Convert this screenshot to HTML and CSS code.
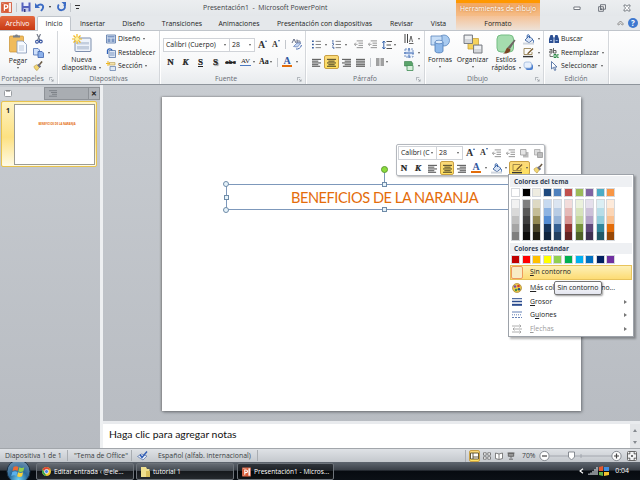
FILE: index.html
```html
<!DOCTYPE html>
<html lang="es">

<head>
    <meta charset="UTF-8">
    <meta name="viewport" content="width=device-width, initial-scale=1.0">
    <title>Presentación1 - Microsoft PowerPoint</title>
    <link rel="stylesheet" href="styles.css">
</head>

<body>
    <!-- Iconos compartidos -->
    <svg class="sprites" width="0" height="0">
        <symbol id="al-left" viewBox="0 0 10 10"><path d="M0 1.5h10M0 3.5h7M0 5.5h10M0 7.5h7M0 9.2h9" stroke="#4a4a4a" stroke-width="1.1"/></symbol>
        <symbol id="al-center" viewBox="0 0 10 10"><path d="M0 1.5h10M1.5 3.5h7M0 5.5h10M1.5 7.5h7M0 9.2h10" stroke="#4a4326" stroke-width="1.1"/></symbol>
        <symbol id="al-right" viewBox="0 0 10 10"><path d="M0 1.5h10M3 3.5h7M0 5.5h10M3 7.5h7M1 9.2h9" stroke="#4a4a4a" stroke-width="1.1"/></symbol>
        <symbol id="al-just" viewBox="0 0 10 10"><path d="M0 1.5h10M0 3.5h10M0 5.5h10M0 7.5h10M0 9.2h10" stroke="#4a4a4a" stroke-width="1.1"/></symbol>
        <symbol id="indent" viewBox="0 0 10 10"><path d="M3 1h7M5 3.5h5M5 6h5M3 8.5h7" stroke="#888"/><path d="M4 4.8H.5M2 3L.4 4.8 2 6.6" stroke="#999" fill="none"/></symbol>
        <symbol id="bullets" viewBox="0 0 10 10"><path d="M0 1.5h2M0 5h2M0 8.5h2" stroke="#3b5f9e" stroke-width="1.7"/><path d="M4 1.5h6M4 5h6M4 8.5h6" stroke="#777"/></symbol>
        <symbol id="bucket" viewBox="0 0 11 11"><path d="M2 6l4-4 4 3.5-4 3.3z" fill="#d5e2f6" stroke="#44669c" stroke-width=".9"/><path d="M4.2 4V1.3c1-1 2.300-.5 2.300 1V4M9 5c2 1.500 2 3 1 4" stroke="#2f5fa8" fill="none"/><path d="M0 9.600h11" stroke="#cfd5de" stroke-width="2"/></symbol>
        <symbol id="outline" viewBox="0 0 11 11"><path d="M1 1.5h7M1 1.5v6h8V5" stroke="#8c7440" fill="none" stroke-width=".8"/><path d="M4 6.5L9.5 1l1 1L5.4 7z" fill="#7a5c2d"/><path d="M0 9.6h10" stroke="#333" stroke-width="1.4"/></symbol>
        <symbol id="brush" viewBox="0 0 11 11"><path d="M1 6l3-2 3 3-2.5 3.5C3 10 1.500 8 1 6z" fill="#f2d774" stroke="#b08e35" stroke-width=".6"/><path d="M4.500 4.500L6 3l3 3-1.800 1.700z" fill="#6c6f85"/><path d="M7 4l3-3.500" stroke="#6a5a45" stroke-width="1.700"/></symbol>
        <symbol id="launch" viewBox="0 0 6 6"><path d="M.5 4V.5H4M2.500 2.500l2.500 2.500M5 2.800V5H2.800" stroke="#8c939b" stroke-width=".8" fill="none"/></symbol>
        <symbol id="ppt" viewBox="0 0 12 12"><path d="M.5.500h11v11H.5z" fill="#fbe9e3" stroke="#d2593a"/><path d="M1 1.500L8.500.5v11L1 10.500z" fill="#d95a35"/><path d="M3.700 9.500V3.200h1.500c2.900 0 2.900 3.600 0 3.600H4" stroke="#fff" stroke-width="1.400" fill="none"/></symbol>
    </svg>

    <div class="window">
        <header class="titlebar">
            <div class="quick">
                <svg width="11" height="11"><use href="#ppt"/></svg>
                <i class="vsep"></i>
                <svg width="10" height="10" viewBox="0 0 10 10"><path d="M.5.500h9v9h-9z" fill="#5562bd"/><path d="M2.500 0h5v4h-5z" fill="#e8ecfa"/><path d="M2.500 6h5v4h-5z" fill="#c4caec"/><path d="M3 7h1.500v3H3z" fill="#333a80"/></svg>
                <svg width="10" height="10" viewBox="0 0 10 10"><path d="M2 4c4-3 7.500-1 5.500 3L6 9" stroke="#3c6cc4" stroke-width="1.900" fill="none"/><path d="M0 1v5h5z" fill="#3c6cc4"/></svg>
                <i class="arrow dark"></i>
                <svg width="9" height="10" viewBox="0 0 9 10"><path d="M1.800 2.500c-2 3.500.2 6 3 5.700 3-.3 4-3.200 2.200-5.700" stroke="#3c6cc4" stroke-width="1.800" fill="none"/><path d="M4.500 0H9v4.500z" fill="#3c6cc4"/></svg>
                <i class="vsep"></i>
                <i class="more"></i>
            </div>
            <div class="doc-title">Presentación1 &nbsp;- &nbsp;Microsoft PowerPoint</div>
            <div class="context-title">Herramientas de dibujo</div>
            <div class="win-buttons">
                <svg width="8" height="8" viewBox="0 0 8 8"><path d="M.9 3h6.200v2.500H.9z" fill="#fff" stroke="#666c75" stroke-width=".9"/></svg>
                <svg width="8" height="8" viewBox="0 0 8 8"><path d="M2.500.7h5v4.500h-5zM.6 2.700h4.800v4.600H.6z" fill="#eee" stroke="#666c75" stroke-width=".9"/><path d="M2 4.500h2V6H2z" fill="#666c75"/></svg>
                <svg width="8" height="8" viewBox="0 0 8 8"><path d="M1 1h1.800L4 2.500 5.200 1H7v1.200L5.400 4 7 5.800V7H5.200L4 5.500 2.800 7H1V5.800L2.600 4 1 2.200z" fill="#fff" stroke="#5c626b" stroke-width=".8"/></svg>
            </div>
        </header>

        <nav class="tabs">
            <div class="tab file">Archivo</div>
            <div class="tab active">Inicio</div>
            <div class="tab t-insertar">Insertar</div>
            <div class="tab t-diseno">Diseño</div>
            <div class="tab t-trans">Transiciones</div>
            <div class="tab t-anim">Animaciones</div>
            <div class="tab t-pres">Presentación con diapositivas</div>
            <div class="tab t-revisar">Revisar</div>
            <div class="tab t-vista">Vista</div>
            <div class="tab t-formato">Formato</div>
            <div class="help">
                <svg width="7" height="6" viewBox="0 0 7 6"><path d="M.6 4L3.500 1l2.900 3-1 1-1.900-1.800L1.600 5z" fill="#fff" stroke="#666" stroke-width=".8"/></svg>
                <span class="help-icon">?</span>
            </div>
        </nav>

        <section class="ribbon">
            <div class="group g-clip">
                <div class="group-body">
                    <div class="big b-pegar">
                        <svg width="18" height="20" viewBox="0 0 18 20"><rect x=".5" y="2" width="14" height="16" rx="1" fill="#f0bb5c" stroke="#c89030" stroke-width=".7"/><path d="M4 3.500V1.500h2C6 0 9 0 9 1.500h2v2z" fill="#777f8a"/><path d="M8 7h6l3.500 3.500V19H8z" fill="#f7faff" stroke="#8296b5" stroke-width=".8"/><path d="M10 12h5M10 14h5M10 16h5" stroke="#a5b6d0" stroke-width=".7"/></svg>
                        <span>Pegar</span>
                        <i class="arrow"></i>
                    </div>
                    <div class="stack">
                        <div class="cmd"><svg width="11" height="10" viewBox="0 0 11 10"><path d="M4 0l3 6.500M7.500 0L4.500 6.500" stroke="#777e8c" stroke-width="1.200"/><circle cx="4" cy="7.700" r="1.400" fill="none" stroke="#2e4d9c" stroke-width="1.100"/><circle cx="7.800" cy="7.500" r="1.400" fill="none" stroke="#2e4d9c" stroke-width="1.100"/></svg></div>
                        <div class="cmd"><svg width="11" height="10" viewBox="0 0 11 10"><path d="M.5.500H5L6.500 2v5h-6z" fill="#cfe0fa" stroke="#4c70b5" stroke-width=".8"/><path d="M5 3.500h4L10.500 5v4.500H5z" fill="#8bb0ea" stroke="#3c62ac" stroke-width=".8"/></svg><i class="arrow"></i></div>
                        <div class="cmd"><svg width="10" height="10"><use href="#brush"/></svg></div>
                    </div>
                </div>
                <div class="group-name">Portapapeles<svg width="5" height="5"><use href="#launch"/></svg></div>
            </div>

            <div class="group g-slides">
                <div class="group-body">
                    <div class="big b-nueva">
                        <svg width="20" height="19" viewBox="0 0 20 19"><rect x="3" y="4" width="16" height="13.500" rx="1" fill="#eef3fa" stroke="#7d8fae"/><path d="M5 8h12v2.500H5zM5 12h12v3.500H5z" fill="#c3cede"/><path d="M5 0v10M0 5h10M1.500 1.500l7 7M8.500 1.500l-7 7" stroke="#f2b91d" stroke-width="1.200"/><circle cx="5" cy="5" r="2" fill="#fff3a0"/></svg>
                        <span>Nueva</span>
                        <span class="drop">diapositiva <i class="arrow"></i></span>
                    </div>
                    <div class="stack">
                        <div class="cmd"><svg width="10" height="10" viewBox="0 0 10 10"><path d="M.5 1h9v8h-9z" fill="#dce6f5" stroke="#5473a5" stroke-width=".8"/><path d="M1.500 2h7v1.500h-7zM1.500 4.500h3v3.500h-3zM5.500 4.500h3v3.500h-3z" fill="#7d98c4"/></svg>Diseño <i class="arrow"></i></div>
                        <div class="cmd"><svg width="10" height="10" viewBox="0 0 10 10"><path d="M3 2.500h6.500v7H3z" fill="#dfe8f5" stroke="#5b79a8" stroke-width=".8"/><path d="M4 5h4.500M4 7h4.500" stroke="#7d98c4"/><path d="M1.500 6V2.500C2 0 6 .5 6 2.500" stroke="#2f62b8" stroke-width="1.300" fill="none"/></svg>Restablecer</div>
                        <div class="cmd"><svg width="10" height="10" viewBox="0 0 10 10"><path d="M3 1.500h6V4H3z" fill="#f5e3ac" stroke="#b79a55" stroke-width=".6"/><path d="M4 5.500h5.500v4H4z" fill="#dfe8f5" stroke="#5b79a8" stroke-width=".7"/><path d="M2 0v5M0 2.500h4" stroke="#efb722"/></svg>Sección <i class="arrow"></i></div>
                    </div>
                </div>
                <div class="group-name">Diapositivas</div>
            </div>

            <div class="group g-font">
                <div class="rows">
                    <div class="row">
                        <div class="combo c-font">Calibri (Cuerpo)<i class="arrow"></i></div>
                        <div class="combo c-size">28<i class="arrow"></i></div>
                        <span class="glyph grow">A<i class="up"></i></span>
                        <span class="glyph shrink">A<i class="down"></i></span>
                        <i class="vsep"></i>
                        <svg width="11" height="11" viewBox="0 0 11 11"><path d="M1 4L3 0l2 4M6 .5v3.500h2.500c1 0 1-2 0-2H6" stroke="#555f78" fill="none" stroke-width=".9"/><path d="M2.500 7.500L6 4h4L6.500 8z" fill="#c8d8f2" stroke="#5a78b4" stroke-width=".7"/><path d="M5 10c2 .5 5-1 5.500-4" stroke="#4a6cb0" fill="none"/></svg>
                    </div>
                    <div class="row letters">
                        <b>N</b>
                        <b><em>K</em></b>
                        <b><u>S</u></b>
                        <b class="shadow">S</b>
                        <b class="strike">abc</b>
                        <span class="av">AV</span><i class="arrow"></i>
                        <span class="aa">Aa</span><i class="arrow"></i>
                        <i class="vsep"></i>
                        <span class="color-a">A</span><i class="arrow"></i>
                    </div>
                </div>
                <div class="group-name">Fuente<svg width="5" height="5"><use href="#launch"/></svg></div>
            </div>

            <div class="group g-para">
                <div class="group-body">
                    <div class="rows">
                        <div class="row">
                            <svg width="9" height="9"><use href="#bullets"/></svg><i class="arrow"></i>
                            <svg class="sp" width="9" height="9" viewBox="0 0 10 10"><path d="M1 0v3M.2 4h1.500v1.500L.3 6.500M0 8h2v2" stroke="#3b5f9e" fill="none"/><path d="M4 1.500h6M4 5h6M4 8.500h6" stroke="#777"/></svg><i class="arrow"></i>
                            <svg class="wide" width="9" height="9"><use href="#indent"/></svg>
                            <svg class="sp" width="9" height="9"><use href="#indent"/></svg>
                            <svg class="sp" width="10" height="10" viewBox="0 0 10 10"><path d="M4.500 1.500H10M4.500 5H9M4.500 8.500H10" stroke="#555"/><path d="M1.800 1v8M.3 2.700L1.800 1l1.500 1.700M.3 7.300L1.800 9l1.500-1.700" stroke="#2f5fa8" fill="none"/></svg><i class="arrow near"></i>
                        </div>
                        <div class="row aligns">
                            <svg width="9" height="9"><use href="#al-left"/></svg>
                            <span class="on"><svg width="9" height="9"><use href="#al-center"/></svg></span>
                            <svg width="9" height="9"><use href="#al-right"/></svg>
                            <svg class="j" width="9" height="9"><use href="#al-just"/></svg>
                            <i class="vsep"></i>
                            <svg width="8" height="8" viewBox="0 0 8 8"><path d="M0 1h3.500M0 3h3.500M0 5h3.500M0 7h3.500M4.500 1H8M4.500 3H8M4.500 5H8M4.500 7H8" stroke="#4a4a4a" stroke-width="1.200"/></svg><i class="arrow near"></i>
                        </div>
                    </div>
                    <div class="stack">
                        <div class="cmd"><svg width="10" height="10" viewBox="0 0 10 10"><path d="M1 0v9M3.500 0v9" stroke="#444"/><path d="M5.500 8l1.500-6 1.500 6M5 9.500h4.500" stroke="#555" fill="none" stroke-width=".9"/></svg><i class="arrow"></i></div>
                        <div class="cmd"><svg width="10" height="10" viewBox="0 0 10 10"><path d="M1 1h8v8H1z" fill="#e6eefa" stroke="#7894c2" stroke-dasharray="2 1"/><path d="M5 0v3.500M5 6.500V10M0 5h10" stroke="#2e5eaf"/></svg><i class="arrow"></i></div>
                        <div class="cmd"><svg width="10" height="10" viewBox="0 0 10 10"><path d="M.5.500h7L9 3 7.500 5h-7z" fill="#5aa46a" stroke="#347a48" stroke-width=".6"/><path d="M3 4.500h6v5H3z" fill="#d8eedb" stroke="#3e8b53" stroke-width=".8"/></svg><i class="arrow"></i></div>
                    </div>
                </div>
                <div class="group-name">Párrafo<svg width="5" height="5"><use href="#launch"/></svg></div>
            </div>

            <div class="group g-draw">
                <div class="group-body">
                    <div class="big b-formas">
                        <svg width="20" height="20" viewBox="0 0 20 20"><circle cx="14" cy="6.500" r="5.500" fill="#a9cbf0" stroke="#5a87bd" stroke-width=".8"/><path d="M1 2h11v9H1z" fill="#c7def7" stroke="#5a87bd" stroke-width=".8"/><path d="M5 8h8v9c0 2.500-8 2.500-8 0z" fill="#8db8ea" stroke="#4a79b5" stroke-width=".8"/><ellipse cx="9" cy="8" rx="4" ry="1.800" fill="#dcebfb" stroke="#4a79b5" stroke-width=".7"/></svg>
                        <span>Formas</span>
                        <i class="arrow"></i>
                    </div>
                    <div class="big b-org">
                        <svg width="20" height="20" viewBox="0 0 20 20"><path d="M5 4.500h10.500V15H5z" fill="#f5d25c" stroke="#c9a23b" stroke-width=".8"/><path d="M1 1h8.500v8.500H1zM10.500 11H19v8h-8.500z" fill="#d3d6da" stroke="#71757b" stroke-width=".9"/><path d="M2 2h6.500v3H2zM11.500 12H18v3h-6.500z" fill="#eef0f2"/></svg>
                        <span>Organizar</span>
                        <i class="arrow"></i>
                    </div>
                    <div class="big b-est">
                        <svg width="20" height="20" viewBox="0 0 20 20"><rect x="1" y="1" width="16.500" height="17" rx="4" fill="#a5dcae" stroke="#75bd83"/><path d="M11.500 13.500L18.500 5.500l1 1-5.500 8.500z" fill="#6e6663"/><path d="M7 19.500c3-1 2-4 4.500-6l3 2c0 3-4 4.500-7.500 4z" fill="#7c4322"/></svg>
                        <span>Estilos</span>
                        <span class="drop">rápidos <i class="arrow"></i></span>
                    </div>
                    <div class="stack">
                        <div class="cmd"><svg width="11" height="11"><use href="#bucket"/></svg><i class="arrow"></i></div>
                        <div class="cmd"><svg width="11" height="11"><use href="#outline"/></svg><i class="arrow"></i></div>
                        <div class="cmd"><svg width="11" height="10" viewBox="0 0 11 10"><rect x="2.500" y="3" width="7.500" height="6" rx="2" fill="#4c7fd0"/><rect x="1" y="1" width="7.500" height="6" rx="2" fill="#e6effc" stroke="#9db7dd" stroke-width=".8"/></svg><i class="arrow"></i></div>
                    </div>
                </div>
                <div class="group-name">Dibujo<svg width="5" height="5"><use href="#launch"/></svg></div>
            </div>

            <div class="group g-edit">
                <div class="group-body">
                    <div class="stack">
                        <div class="cmd"><svg width="10" height="10" viewBox="0 0 10 10"><path d="M1.500 1h2.200L4.500 4v5H0V5zM6.300 1h2.200L10 5v4H5.500V4z" fill="#2c4f91"/><path d="M4 3.500h2v2H4z" fill="#5e7fb8"/><path d="M1 6.500h2M6.700 6.500h2" stroke="#9db8e3"/></svg>Buscar</div>
                        <div class="cmd"><svg width="10" height="10" viewBox="0 0 10 10"><path d="M.5 1.500h2.500V5H.8V3H3M4.500 0v5H7V2.500H4.500" stroke="#555" fill="none" stroke-width=".9"/><path d="M1 6v2.500h3" stroke="#555" fill="none" stroke-width=".8"/><path d="M5 6.500h2v3H5zM9.800 6.800H8v2.500h1.800" stroke="#2d8a47" fill="none"/></svg>Reemplazar <i class="arrow"></i></div>
                        <div class="cmd"><svg width="10" height="10" viewBox="0 0 10 10"><path d="M2.500.500v7.500L4.400 6.300 5.700 9.500l1.200-.6L5.600 6H8z" fill="#fff" stroke="#3e5f98" stroke-width=".8"/></svg>Seleccionar <i class="arrow"></i></div>
                    </div>
                </div>
                <div class="group-name">Edición</div>
            </div>
        </section>

        <main class="workspace">
            <aside class="outline">
                <div class="pane-tabs">
                    <div class="pane-tab current"><svg width="8" height="7" viewBox="0 0 8 7"><rect x=".5" y=".5" width="7" height="6" rx="1" fill="#fff" stroke="#999da2"/><path d="M2 1h4" stroke="#777"/></svg></div>
                    <div class="pane-tab"><svg width="8" height="7" viewBox="0 0 8 7"><path d="M0 .7h8M2 2.500h6M3 4.300h5M0 6.200h8" stroke="#7d8288"/></svg></div>
                    <div class="pane-close">✕</div>
                </div>
                <div class="thumb">
                    <span class="num">1</span>
                    <div class="mini-slide">BENEFICIOS DE LA NARANJA</div>
                </div>
            </aside>
            <div class="editor">
                <div class="canvas">
                    <div class="slide">
                        <div class="title-box">
                            BENEFICIOS DE LA NARANJA
                            <i class="stem"></i>
                            <i class="rot"></i>
                            <i class="h round tl"></i>
                            <i class="h round bl"></i>
                            <i class="h ml"></i>
                            <i class="h tm"></i>
                            <i class="h bm"></i>
                        </div>
                    </div>
                </div>
                <div class="notes">
                    <div class="notes-text">Haga clic para agregar notas</div>
                    <div class="scroll"><i class="tri-up"></i><i class="tri-down"></i></div>
                </div>
            </div>
        </main>

        <footer class="status">
            <span class="st s1">Diapositiva 1 de 1</span>
            <span class="st s2">"Tema de Office"</span>
            <span class="st s3"><svg width="11" height="10" viewBox="0 0 11 10"><path d="M.5 5.500l4-2.500 5.500 2-4 4z" fill="#e7edf8" stroke="#5471a8" stroke-width=".7"/><path d="M3 3.500l2 3L10 .5" stroke="#2f5cb5" stroke-width="1.400" fill="none"/></svg>Español (alfab. internacional)</span>
            <div class="views">
                <span class="view on"><svg width="9" height="8" viewBox="0 0 9 8"><path d="M.5 1h8v6h-8zM3 1v6M3 5h5.500" fill="#fff" stroke="#554a2a" stroke-width=".9"/></svg></span>
                <svg width="8" height="8" viewBox="0 0 8 8"><path d="M.5.800h2.700v2.400H.5zM4.800.8h2.700v2.400H4.800zM.5 4.800h2.700v2.400H.5zM4.800 4.800h2.700v2.400H4.800z" fill="#fff" stroke="#666" stroke-width=".8"/></svg>
                <svg width="8" height="8" viewBox="0 0 8 8"><path d="M.5 1L4 2l3.500-1v5.500L4 7.500l-3.500-1zM4 2v5" fill="#fff" stroke="#666" stroke-width=".8"/></svg>
                <svg width="8" height="8" viewBox="0 0 8 8"><path d="M.5 1h7M1.300 1.300h5.400v3H1.300zM4 4.500v2M2 7.200h4" fill="#999" stroke="#555" stroke-width=".8"/></svg>
            </div>
            <span class="zoom">70%</span>
            <svg width="84" height="12" viewBox="0 0 84 12">
                <path d="M11 6h62M42 4v4" stroke="#9a9fa6" stroke-width=".8"/>
                <circle cx="5.500" cy="6" r="4.600" fill="#fdfdfd" stroke="#6f757c" stroke-width=".8"/><path d="M3 6h5" stroke="#444" stroke-width="1.200"/>
                <path d="M29.500 2h6v5l-3 3-3-3z" fill="#fff" stroke="#6f757c" stroke-width=".8"/>
                <circle cx="77.500" cy="6" r="4.600" fill="#fdfdfd" stroke="#6f757c" stroke-width=".8"/><path d="M75 6h5M77.500 3.500v5" stroke="#444" stroke-width="1.200"/>
            </svg>
            <svg class="fit" width="10" height="10" viewBox="0 0 10 10"><rect x=".5" y=".5" width="9" height="9" rx="1" fill="#f2f3f4" stroke="#666"/><path d="M2 2h1.500M2 2v1.500M8 2H6.500M8 2v1.500M2 8h1.500M2 8V6.500M8 8H6.500M8 8V6.500M4 5h2M5 4v2" stroke="#444"/></svg>
        </footer>

        <div class="taskbar">
            <svg class="start" width="25" height="18" viewBox="0 0 25 18">
                <defs><radialGradient id="orb" cx=".5" cy=".85" r=".8"><stop offset="0" stop-color="#6fd0f2"/><stop offset=".5" stop-color="#286a9c"/><stop offset="1" stop-color="#6e8fac"/></radialGradient></defs>
                <circle cx="12.500" cy="9.500" r="11.500" fill="url(#orb)" stroke="#1a2f45"/>
                <path d="M7.500 5c2-1.200 3.500-1 5 0l-1 4c-1.500-1-3-1-5 0z" fill="#ee6a32"/><path d="M13.300 5.300c1.700 1 3.300 1 5 0l-1 4c-1.800 1-3.400 1-5 0z" fill="#92cf4c"/><path d="M6.300 10c2-1.200 3.500-1 5 0l-1 4c-1.500-1-3-1-5 0z" fill="#5bb0ea"/><path d="M12.100 10.300c1.700 1 3.300 1 5 0l-1 4c-1.800 1-3.400 1-5 0z" fill="#fbd13b"/>
            </svg>
            <div class="task k1"><svg width="9" height="9" viewBox="0 0 9 9"><circle cx="4.500" cy="4.500" r="4.500" fill="#f4c82e"/><path d="M.6 2.300A4.500 4.500 0 018.500 2.500H4.500L3 5z" fill="#dd4638"/><path d="M.6 2.300L3 6.500l1.500 2.400A4.500 4.500 0 01.6 2.300z" fill="#35a353"/><circle cx="4.500" cy="4.500" r="2" fill="#4a86e8" stroke="#fff" stroke-width=".7"/></svg>Editar entrada ‹ @ele...</div>
            <div class="task k2"><svg width="9" height="10" viewBox="0 0 9 10"><path d="M0 0h5l1 2h2.500v8H0z" fill="#f0e08f"/><path d="M5 4h4v6H5z" fill="#d9bf5d"/></svg>tutorial 1</div>
            <div class="task k3"><svg width="9" height="10"><use href="#ppt"/></svg>Presentación1 - Micros...</div>
            <div class="tray">
                <svg width="5" height="6" viewBox="0 0 5 6"><path d="M4 .7L1 3l3 2.300" stroke="#fff" stroke-width="1.100" fill="none"/></svg>
                <svg width="10" height="8" viewBox="0 0 10 8"><path d="M1 8V6.500M3 8V5.500M5 8V4M7 8V2M9 8V0" stroke="#c6cbd1" stroke-width="1.300"/></svg>
                <svg width="10" height="10" viewBox="0 0 10 10"><path d="M0 1l4-1v5H0z" fill="#e4572f"/><path d="M5 1h5v4H5z" fill="#3f8de0"/><path d="M0 6h4v4L0 9z" fill="#62b145"/><path d="M5 6h5v3l-5 1z" fill="#f3c32f"/></svg>
                <span class="clock">0:04</span>
            </div>
        </div>
    </div>

    <!-- Minibarra flotante -->
    <div class="minibar">
        <div class="mrow">
            <div class="combo m-font">Calibri (C<i class="arrow"></i></div>
            <div class="combo m-size">28<i class="arrow"></i></div>
            <span class="glyph grow">A<i class="up"></i></span>
            <span class="glyph shrink">A<i class="down"></i></span>
            <svg width="9" height="9"><use href="#indent"/></svg>
            <svg width="9" height="9"><use href="#indent"/></svg>
            <svg width="9" height="9" viewBox="0 0 9 9"><path d="M3 3h5.500v5.500H3z" fill="#bbb"/><path d="M.5.500H6V6H.5z" fill="#e4e4e4" stroke="#999" stroke-width=".8"/></svg>
            <svg width="9" height="9" viewBox="0 0 9 9"><path d="M.5.500H6V6H.5z" fill="#ddd" stroke="#aaa" stroke-width=".8"/><path d="M3.500 3.500h5v5h-5z" fill="#bbb" stroke="#999" stroke-width=".8"/></svg>
        </div>
        <div class="mrow m2">
            <b>N</b>
            <b><em>K</em></b>
            <svg width="9" height="9"><use href="#al-left"/></svg>
            <span class="on"><svg width="9" height="9"><use href="#al-center"/></svg></span>
            <svg width="9" height="9"><use href="#al-right"/></svg>
            <span class="color-a">A</span><i class="arrow"></i>
            <svg class="mb" width="11" height="11"><use href="#bucket"/></svg><i class="arrow"></i>
            <span class="on split"><svg width="11" height="11"><use href="#outline"/></svg><i class="arrow"></i></span>
            <svg class="last" width="10" height="11"><use href="#brush"/></svg>
        </div>
    </div>

    <!-- Menú de contorno -->
    <div class="menu">
        <div class="menu-head">Colores del tema</div>
        <div class="swatches" id="theme"></div>
        <div class="shades" id="shades"></div>
        <div class="menu-head second">Colores estándar</div>
        <div class="swatches std" id="standard"></div>
        <div class="item hot"><span class="ic"><i class="empty"></i></span><span><u>S</u>in contorno</span></div>
        <div class="item"><span class="ic"><svg width="10" height="10" viewBox="0 0 10 10"><circle cx="5" cy="5" r="4.500" fill="#efc94c" stroke="#a88430" stroke-width=".7"/><circle cx="3" cy="3.500" r="1.300" fill="#7b4fa3"/><circle cx="6.500" cy="3" r="1.300" fill="#d6392c"/><circle cx="7" cy="6.200" r="1.300" fill="#27547f"/><circle cx="4" cy="7" r="1.200" fill="#3f9447"/></svg></span><span><u>M</u>ás colores de contorno...</span></div>
        <div class="item"><span class="ic"><svg width="10" height="8" viewBox="0 0 10 8"><path d="M0 .7h10" stroke="#2a4b8d" stroke-width="1"/><path d="M0 3.500h10" stroke="#2a4b8d" stroke-width="1.500"/><path d="M0 6.800h10" stroke="#2a4b8d" stroke-width="2"/></svg></span><span><u>G</u>rosor</span><i class="sub"></i></div>
        <div class="item"><span class="ic"><svg width="10" height="8" viewBox="0 0 10 8"><path d="M0 1h10" stroke="#6480b5"/><path d="M0 3.800h10" stroke="#6480b5" stroke-dasharray="1 1"/><path d="M0 6.500h10" stroke="#6480b5" stroke-dasharray="2 1"/></svg></span><span>G<u>u</u>iones</span><i class="sub"></i></div>
        <div class="item off"><span class="ic"><svg width="10" height="10" viewBox="0 0 10 10"><path d="M0 2h9M7.500.500L9 2 7.500 3.500M10 5H1M2.500 3.500L1 5l1.500 1.500M0 8h9M7.500 6.500L9 8 7.500 9.500" stroke="#9b9b9b" stroke-width=".8" fill="none"/></svg></span><span><u>F</u>lechas</span><i class="sub"></i></div>
    </div>
    <div class="tooltip">Sin contorno</div>

    <script>
        // Paletas del menú
        const theme = ['#ffffff', '#000000', '#eeece1', '#1f497d', '#4f81bd', '#c0504d', '#9bbb59', '#8064a2', '#4bacc6', '#f79646'];
        const standard = ['#c00000', '#ff0000', '#ffc000', '#ffff00', '#92d050', '#00b050', '#00b0f0', '#0070c0', '#002060', '#7030a0'];
        const shades = [
            ['#f2f2f2', '#d9d9d9', '#bfbfbf', '#a5a5a5', '#7f7f7f'],
            ['#7f7f7f', '#595959', '#3f3f3f', '#262626', '#0c0c0c'],
            ['#ddd9c3', '#c4bd97', '#938953', '#494429', '#1d1b10'],
            ['#c6d9f0', '#8db3e2', '#548dd4', '#17365d', '#0f243e'],
            ['#dbe5f1', '#b8cce4', '#95b3d7', '#366092', '#244061'],
            ['#f2dcdb', '#e5b9b7', '#d99694', '#953734', '#632423'],
            ['#ebf1dd', '#d7e3bc', '#c3d69b', '#76923c', '#4f6128'],
            ['#e5e0ec', '#ccc1d9', '#b2a2c7', '#5f497a', '#3f3151'],
            ['#dbeef3', '#b7dde8', '#92cddc', '#31859b', '#205867'],
            ['#fdeada', '#fbd5b5', '#fac08f', '#e36c09', '#974806']
        ];
        const cell = c => `<i style="background:${c}"></i>`;

        document.getElementById('theme').innerHTML = theme.map(cell).join('');
        document.getElementById('standard').innerHTML = standard.map(cell).join('');
        document.getElementById('shades').innerHTML = shades.map(col => `<div>${col.map(cell).join('')}</div>`).join('');
    </script>
</body>

</html>
```
FILE: styles.css
```css
* {
    box-sizing: border-box;
}

body {
    margin: 0;
    width: 640px;
    height: 480px;
    overflow: hidden;
    font-family: "Open Sans", "Noto Sans", sans-serif;
    font-size: 6.9px;
    line-height: 8px;
    color: #222;
    white-space: nowrap;
}

svg {
    display: block;
    flex: none;
    fill: none;
}

.sprites {
    position: absolute;
}

.window {
    display: flex;
    flex-direction: column;
    width: 640px;
    height: 480px;
}

/* Elementos comunes */
.arrow {
    flex: none;
    display: inline-block;
    border: 1.5px solid transparent;
    border-top: 2px solid #555;
    border-bottom: 0;
}

.arrow.dark {
    border-top-color: #222;
}

.vsep {
    flex: none;
    width: 1px;
    height: 9px;
    background: #c3c7cc;
}

.on {
    display: flex;
    align-items: center;
    justify-content: center;
    background: linear-gradient(#fbd97a, #ffe15f);
    border: 1px solid #c9a044;
    border-radius: 2px;
}

/* Barra de título */
.titlebar {
    display: flex;
    height: 16px;
    background: linear-gradient(#eceef0, #e4e7ea);
}

.quick {
    display: flex;
    align-items: center;
    width: 190px;
    padding-bottom: 2px;
    padding-left: 1px;
    gap: 4px;
}

.quick .arrow {
    margin-right: 2px;
}

.more {
    width: 5px;
    height: 5px;
    border-top: 1px solid #333;
    background: linear-gradient(#333, #333) center 2px / 3px 1px no-repeat;
}

.doc-title {
    width: 266px;
    padding: 4px 0 0 13px;
    color: #3d4045;
}

.context-title {
    width: 84px;
    padding-top: 2px;
    border-top: 3px solid #ff9800;
    background: linear-gradient(#f3a75f, #f5bd89);
    color: #fff;
    text-align: center;
    text-shadow: 0 0 2px #b06a2a;
}

.win-buttons {
    display: flex;
    align-items: center;
    justify-content: flex-end;
    gap: 17px;
    flex: 1;
    padding: 0 9px 1px 0;
}

/* Pestañas */
.tabs {
    display: flex;
    height: 15px;
    background: #e5e8eb;
    border-bottom: 1px solid #c0c5cb;
}

.tab {
    flex: none;
    text-align: center;
    line-height: 15px;
}

.file {
    width: 35px;
    margin-right: 2px;
    background: linear-gradient(#e4693f, #c83a14);
    border-radius: 2px 2px 0 0;
    color: #fff;
}

.active {
    width: 34px;
    height: 15px;
    background: #fff;
    border: 1px solid #c0c5cb;
    border-bottom: 0;
    border-radius: 2px 2px 0 0;
    line-height: 14px;
}

.t-insertar { width: 43px; }
.t-diseno { width: 39px; }
.t-trans { width: 58px; }
.t-anim { width: 56px; }
.t-pres { width: 115px; }
.t-revisar { width: 39px; }
.t-vista { width: 35px; }

.t-formato {
    width: 84px;
    background: linear-gradient(#f5c297, #eee2d8);
}

.help {
    display: flex;
    align-items: center;
    justify-content: flex-end;
    gap: 4px;
    flex: 1;
    padding-right: 2px;
}

.help-icon {
    width: 10px;
    height: 10px;
    border-radius: 50%;
    background: #3e78cf;
    color: #fff;
    font-size: 8px;
    font-weight: bold;
    line-height: 10px;
    text-align: center;
}

/* Cinta */
.ribbon {
    display: flex;
    height: 54px;
    background: linear-gradient(#fff, #f7f8f9 60%, #e8ebee);
    border-bottom: 1px solid #8f959c;
}

.group {
    display: flex;
    flex-direction: column;
    flex: none;
    border-right: 1px solid #d4d7db;
    box-shadow: 1px 0 0 #fff;
}

.g-clip { width: 58px; }
.g-slides { width: 102px; }
.g-font { width: 146px; }
.g-para { width: 119px; }
.g-draw { width: 119px; }
.g-edit { width: 65px; }

.group-body {
    display: flex;
    height: 43px;
}

.group-name {
    display: flex;
    align-items: center;
    justify-content: center;
    position: relative;
    height: 10px;
    color: #666c74;
}

.group-name svg {
    position: absolute;
    right: 3px;
    top: 3px;
}

.g-clip .group-name {
    padding-right: 12px;
}

.g-font .group-name,
.g-draw .group-name {
    padding-right: 13px;
}

.big {
    display: flex;
    flex-direction: column;
    align-items: center;
    padding-top: 3px;
}

.big svg {
    margin-bottom: 2px;
}

.big > .arrow {
    margin-top: 2px;
}

.drop {
    display: flex;
    align-items: center;
    gap: 3px;
}

.b-pegar { width: 36px; }
.b-nueva { width: 47px; }
.b-formas { width: 30px; }
.b-org { width: 35px; }
.b-est { width: 32px; }

.b-pegar svg {
    margin-bottom: 3px;
}

.b-nueva svg {
    margin-bottom: 3px;
}

.stack {
    display: flex;
    flex-direction: column;
    padding-top: 1.5px;
}

.cmd {
    display: flex;
    align-items: center;
    gap: 3px;
    height: 13.6px;
}

.g-slides .cmd,
.g-edit .cmd {
    gap: 2px;
}

.g-slides .stack {
    padding-left: 1px;
}

.g-draw .stack {
    padding-left: 1px;
}

.g-edit .stack {
    padding-left: 5px;
}

.cmd .arrow {
    margin-left: 1px;
}

.g-clip .stack {
    margin-left: -3px;
}

.rows {
    height: 43px;
    padding: 6px 0 0 3px;
}

.row {
    display: flex;
    align-items: center;
    height: 15px;
}

.row + .row {
    height: 14px;
    margin-top: 3px;
}

.combo {
    display: flex;
    flex: none;
    align-items: center;
    justify-content: space-between;
    height: 14px;
    padding: 0 3px 0 2px;
    background: #fff;
    border: 1px solid #d0d3d8;
}

.c-font { width: 67px; }
.c-size { width: 26px; margin-left: -1px; }

.glyph {
    display: flex;
    flex: none;
    font-family: "Liberation Serif", serif;
    font-weight: bold;
    color: #333;
}

.grow {
    margin-left: 3px;
    width: 14px;
    font-size: 10px;
}

.shrink {
    width: 13px;
    font-size: 8px;
}

.up,
.down {
    margin-top: -1px;
    width: 0;
    height: 0;
    border: 1.5px solid transparent;
    border-top: 0;
    border-bottom: 2px solid #355f9f;
}

.down {
    border-top: 2px solid #355f9f;
    border-bottom: 0;
}

.row .glyph + .vsep {
    margin-right: 5px;
}

.letters b,
.m2 b {
    font-family: "Liberation Serif", serif;
    font-size: 9px;
    -webkit-text-stroke: 0.2px #222;
    color: #222;
}

.letters b {
    width: 15px;
    text-align: center;
}

.letters b.shadow {
    text-shadow: 1px 1px 1px #777;
}

.letters b.strike {
    font-family: "Open Sans", sans-serif;
    font-size: 6px;
    text-decoration: line-through;
}

.av {
    width: 11px;
    margin: 0 2px 0 2px;
    border-bottom: 1px solid #4c79bf;
    font-family: "Liberation Serif", serif;
    font-size: 7px;
    line-height: 7px;
    text-align: center;
}

.aa {
    width: 11px;
    margin-left: 4px;
    font-family: "Liberation Serif", serif;
    font-size: 8px;
    font-weight: bold;
}

.letters .vsep {
    margin: 0 4px 0 5px;
}

.color-a {
    width: 10px;
    border-bottom: 2px solid #e36c09;
    font-family: "Liberation Serif", serif;
    font-size: 10px;
    font-weight: bold;
    line-height: 8px;
    text-align: center;
    color: #2f56a0;
}

.color-a + .arrow {
    margin-left: 4px;
}

.g-para .rows {
    width: 98px;
    padding-left: 6px;
}

.g-para .row .arrow {
    margin-left: 4px;
}

.g-para .row .near {
    margin-left: 2px;
}

.sp {
    margin-left: 5px;
}

.wide {
    margin-left: 7px;
}

.aligns .on {
    width: 15px;
    height: 14px;
    margin: 0 3px;
}

.aligns .j {
    margin-left: 5px;
}

.aligns .vsep {
    margin: 0 5px;
}

/* Área de trabajo */
.workspace {
    display: flex;
    height: 363px;
    background: linear-gradient(#c8ccd1, #b7bbc1);
}

.outline {
    width: 103px;
    padding-top: 2px;
    border-right: 3px solid #eef0f2;
}

.pane-tabs {
    display: flex;
    height: 13px;
}

.pane-tab {
    width: 44px;
    padding: 2px 0 0 4px;
    background: #a9adb2;
    border: 1px solid #8e9297;
    border-width: 1px 0 1px 1px;
}

.pane-tab.current {
    background: #d3d6da;
    border: 0;
    padding-top: 3px;
}

.pane-close {
    width: 12px;
    background: #b0b4b9;
    border: 1px solid #8e9297;
    text-align: center;
    font-size: 7px;
    font-weight: bold;
    line-height: 11px;
}

.thumb {
    display: flex;
    width: 96px;
    height: 66px;
    margin: 1px 0 0 1px;
    padding: 2px 1px;
    background: linear-gradient(#fef3c2, #fde182 55%, #fffbe6);
    border: 1px solid #e8c34e;
    border-radius: 2px;
}

.num {
    width: 11px;
    padding: 3px 0 0 3px;
    font-weight: bold;
}

.mini-slide {
    width: 81px;
    height: 61px;
    padding: 15px 0 0 5px;
    background: #fff;
    border: 1px solid #9c9c94;
    color: #e46c0a;
    font-size: 2.7px;
    font-weight: bold;
    text-align: center;
}

.editor {
    flex: 1;
}

.canvas {
    height: 336px;
    padding: 12px 0 0 59px;
}

.slide {
    width: 419px;
    height: 314px;
    padding: 87px 0 0 64px;
    background: #fff;
    box-shadow: 1px 1px 3px #6a6e73, -1px 0 2px #888;
}

.title-box {
    position: relative;
    width: 317px;
    height: 26px;
    border: 1px solid #7d98bb;
    color: #e46c0a;
    font-family: Lato, sans-serif;
    font-size: 14.6px;
    letter-spacing: -0.45px;
    line-height: 25px;
    text-align: center;
}

/* Tiradores de selección */
.h {
    position: absolute;
    width: 5px;
    height: 5px;
    background: #e6f3fa;
    border: 1px solid #6f8ba8;
}

.round {
    width: 6px;
    height: 6px;
    border-radius: 50%;
}

.tl { left: -4px; top: -4px; }
.bl { left: -4px; bottom: -4px; }
.ml { left: -3px; top: 10px; }
.tm { left: 155px; top: -3px; }
.bm { left: 155px; bottom: -3px; }

.stem {
    position: absolute;
    left: 157px;
    top: -14px;
    width: 1px;
    height: 12px;
    background: #7d98bb;
}

.rot {
    position: absolute;
    left: 154px;
    top: -19px;
    width: 7px;
    height: 7px;
    background: #8bdc3c;
    border: 1px solid #5f9a35;
    border-radius: 50%;
}

.notes {
    display: flex;
    height: 27px;
    border-top: 3px solid #e9ebee;
    background: #fff;
}

.notes-text {
    flex: 1;
    padding-left: 6px;
    font-family: Lato, sans-serif;
    font-size: 10.4px;
    line-height: 21px;
    color: #111;
}

.scroll {
    display: flex;
    flex-direction: column;
    align-items: center;
    justify-content: space-between;
    width: 10px;
    padding: 5px 0 4px;
    background: #e3e5e8;
}

.tri-up {
    border: 2.5px solid transparent;
    border-top: 0;
    border-bottom: 3px solid #85898f;
}

.tri-down {
    border: 2.5px solid transparent;
    border-bottom: 0;
    border-top: 3px solid #85898f;
}

/* Barra de estado */
.status {
    display: flex;
    align-items: center;
    height: 14px;
    background: linear-gradient(#dfe2e6, #c4c8cd);
    border-top: 1px solid #a2a6ab;
    color: #3a3e43;
}

.st {
    display: flex;
    flex: none;
    align-items: center;
    height: 11px;
    border-right: 1px solid #a9adb2;
}

.s1 { width: 68px; padding-left: 5px; }
.s2 { width: 64px; padding-left: 6px; }
.s3 { width: 126px; padding-left: 5px; gap: 10px; }

.views {
    display: flex;
    flex: none;
    align-items: center;
    gap: 4px;
    margin-left: 207px;
    padding-left: 3px;
    border-left: 1px solid #a9adb2;
    margin-right: 7px;
}

.view.on {
    width: 11px;
    height: 12px;
    margin-right: -1px;
}

.zoom {
    flex: none;
    width: 17px;
    font-size: 6.8px;
}

.fit {
    margin-left: 4px;
}

/* Barra de tareas */
.taskbar {
    display: flex;
    height: 18px;
    padding-left: 6px;
    background: linear-gradient(#5f666f, #3a4048 45%, #070b10 50%, #0b1016);
    overflow: hidden;
    color: #fff;
}

.task {
    display: flex;
    flex: none;
    align-items: center;
    gap: 3px;
    width: 98px;
    height: 17px;
    margin-top: 1px;
    padding-left: 5px;
    background: linear-gradient(#646a72, #434950 45%, #16191d 50%, #24282d);
    border: 1px solid #6d737a;
    border-radius: 2px;
    font-size: 6.6px;
}

.k1 { margin-left: 5px; }
.k2 { margin-left: 2px; padding-left: 4px; }

.k3 {
    width: 97px;
    margin-left: 3px;
    padding-left: 4px;
    background: linear-gradient(#30353b, #1c2025 45%, #050709 50%, #111417);
}

.tray {
    display: flex;
    align-items: center;
    justify-content: flex-end;
    flex: 1;
    padding-right: 11px;
    gap: 4px;
}

.tray svg:nth-child(3) {
    margin-left: -3px;
}

.clock {
    margin-left: 2px;
}

/* Minibarra */
.minibar {
    position: absolute;
    left: 396px;
    top: 144px;
    width: 149px;
    height: 32px;
    padding: 1px;
    background: #fff;
    border: 1px solid #b4b8be;
    border-radius: 2px;
    box-shadow: 1px 1px 2px rgba(0, 0, 0, 0.3);
}

.mrow {
    display: flex;
    align-items: center;
    height: 14px;
}

.m-font { width: 39px; }
.m-size { width: 27px; margin-left: -1px; }

.mrow svg {
    margin-right: 5px;
}

.mrow .shrink {
    width: 12px;
}

.m2 {
    height: 14px;
    margin-top: 1px;
}

.m2 b {
    flex: none;
    width: 14px;
    margin-left: -1px;
    text-align: center;
}

.m2 b + b {
    margin: 0 3px 0 0;
}

.m2 .on {
    flex: none;
    width: 14px;
    height: 14px;
    margin-right: 3px;
    margin-left: -2px;
}

.m2 .on svg {
    margin: 0;
}

.m2 .split {
    width: 21px;
    margin: 0 3px 0 2px;
    gap: 3px;
}

.m2 .mb {
    margin: 0 3px 0 4px;
}

.mrow .last {
    margin-right: 0;
}

/* Menú */
.menu {
    position: absolute;
    left: 508px;
    top: 174px;
    width: 126px;
    height: 163px;
    padding: 1px;
    background: #fff;
    border: 1px solid #9da2a9;
    box-shadow: 2px 2px 2px rgba(0, 0, 0, 0.3);
}

.menu-head {
    height: 11px;
    padding-left: 4px;
    background: #eef0f3;
    font-weight: bold;
    font-size: 6.5px;
    line-height: 11px;
    color: #333f55;
}

.second {
    margin-top: 3px;
}

.swatches,
.shades {
    display: flex;
    gap: 3.6px;
    padding-left: 2px;
}

.swatches {
    margin-top: 2px;
}

.swatches i {
    width: 7px;
    height: 7px;
    outline: 0.5px solid #d5d8dc;
}

.shades {
    margin-top: 4px;
}

.shades div {
    width: 7px;
    outline: 0.5px solid #d5d8dc;
}

.shades i {
    display: block;
    height: 8px;
}

.item {
    display: flex;
    align-items: center;
    height: 13.7px;
}

.item u {
    text-underline-offset: 1px;
}

.ic {
    display: flex;
    justify-content: center;
    width: 14px;
    margin-right: 6px;
}

.hot {
    height: 15px;
    margin: 1.5px 0;
    background: linear-gradient(#fdf0b8, #fddc74);
    border: 1px solid #e8c35c;
}

.hot .ic {
    margin-left: -1px;
    margin-right: 6px;
}

.empty {
    width: 12px;
    height: 13px;
    background: #f8ecc4;
    border: 1px solid #ee9a5c;
    border-radius: 2px;
}

.sub {
    margin-left: auto;
    margin-right: 5px;
    border: 2px solid transparent;
    border-left: 3px solid #777;
    border-right: 0;
}

.off {
    color: #9b9b9b;
}

.tooltip {
    position: absolute;
    left: 554px;
    top: 281px;
    width: 48px;
    height: 14px;
    background: linear-gradient(#fff, #e4e6f0);
    border: 1px solid #767676;
    border-radius: 2px;
    box-shadow: 1px 1px 2px rgba(0, 0, 0, 0.4);
    line-height: 12px;
    text-align: center;
}
```
